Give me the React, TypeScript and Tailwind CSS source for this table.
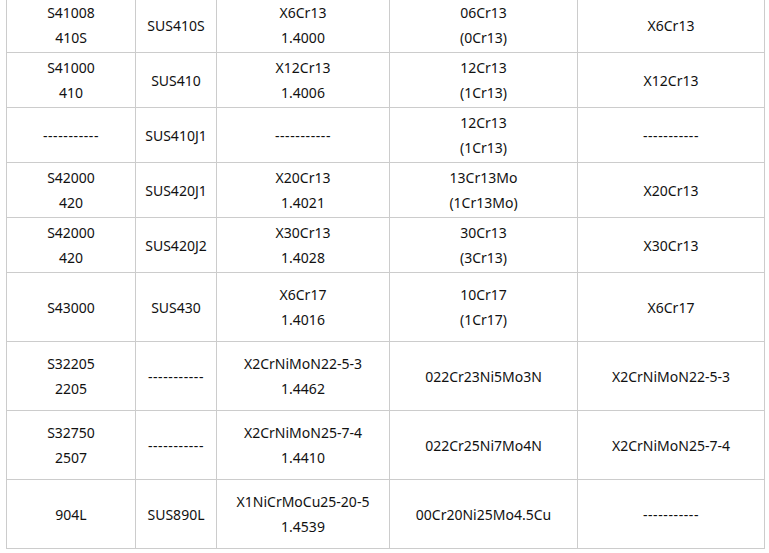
import React from "react";

const rows: [string[], string[], string[], string[], string[], number][] = [
  [["S41008", "410S"], ["SUS410S"], ["X6Cr13", "1.4000"], ["06Cr13", "(0Cr13)"], ["X6Cr13"], 55],
  [["S41000", "410"], ["SUS410"], ["X12Cr13", "1.4006"], ["12Cr13", "(1Cr13)"], ["X12Cr13"], 55],
  [["-----------"], ["SUS410J1"], ["-----------"], ["12Cr13", "(1Cr13)"], ["-----------"], 55],
  [["S42000", "420"], ["SUS420J1"], ["X20Cr13", "1.4021"], ["13Cr13Mo", "(1Cr13Mo)"], ["X20Cr13"], 55],
  [["S42000", "420"], ["SUS420J2"], ["X30Cr13", "1.4028"], ["30Cr13", "(3Cr13)"], ["X30Cr13"], 55],
  [["S43000"], ["SUS430"], ["X6Cr17", "1.4016"], ["10Cr17", "(1Cr17)"], ["X6Cr17"], 69],
  [["S32205", "2205"], ["-----------"], ["X2CrNiMoN22-5-3", "1.4462"], ["022Cr23Ni5Mo3N"], ["X2CrNiMoN22-5-3"], 69],
  [["S32750", "2507"], ["-----------"], ["X2CrNiMoN25-7-4", "1.4410"], ["022Cr25Ni7Mo4N"], ["X2CrNiMoN25-7-4"], 69],
  [["904L"], ["SUS890L"], ["X1NiCrMoCu25-20-5", "1.4539"], ["00Cr20Ni25Mo4.5Cu"], ["-----------"], 69],
];

const widths = ["w-[129px]", "w-[81px]", "w-[173px]", "w-[188px]", "w-[187px]"];

export default function App() {
  return (
    <div className="w-[769px] h-[553px] bg-white overflow-hidden">
      <table
        className="ml-[6px] -mt-[3px] border-collapse table-fixed w-[759px] text-[14px] leading-[25px] text-[#111]"
        style={{ fontFamily: '"Noto Sans", "Open Sans", sans-serif' }}
      >
        <colgroup>
          {widths.map((w, i) => (
            <col key={i} className={w} />
          ))}
        </colgroup>
        <tbody>
          {rows.map((r, ri) => (
            <tr key={ri} style={{ height: r[5] }}>
              {(r.slice(0, 5) as string[][]).map((lines, ci) => (
                <td
                  key={ci}
                  className="border border-[#cccccc] text-center align-middle p-0"
                >
                  {lines.map((l, li) => (
                    <div key={li} className={l.startsWith("---") ? "tracking-[0.6px]" : ""}>
                      {l}
                    </div>
                  ))}
                </td>
              ))}
            </tr>
          ))}
        </tbody>
      </table>
    </div>
  );
}
